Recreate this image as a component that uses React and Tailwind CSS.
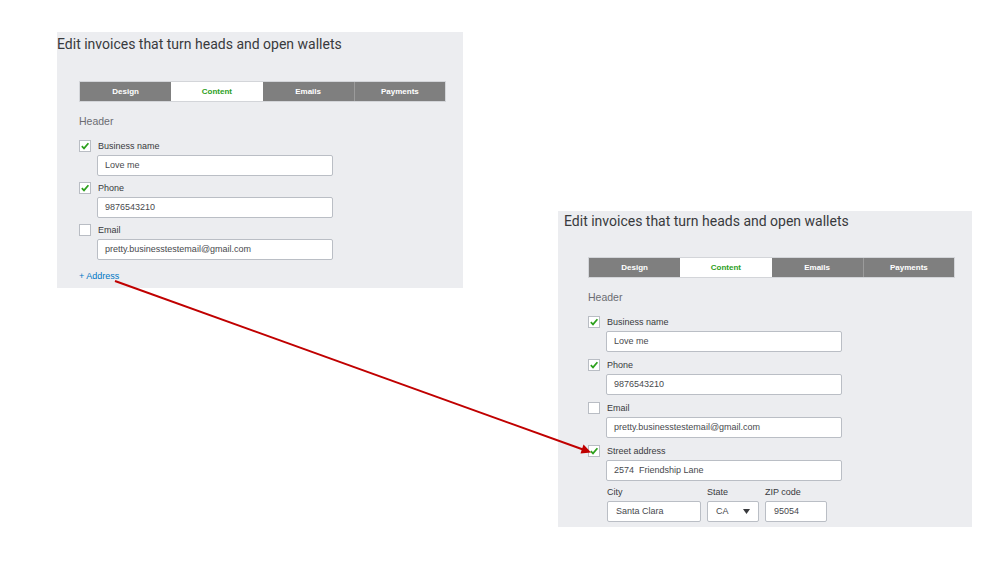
const ui = { fontFamily: '"Liberation Sans", Arial, sans-serif' };

const Check = ({ on }) => (
  <span className="flex h-[12px] w-[12px] shrink-0 items-center justify-center border border-[#b9bdc4] bg-white">
    {on && (
      <svg width="10" height="10" viewBox="0 0 10 10">
        <path d="M1.8 5.2 L4 7.4 L8.4 2.2" fill="none" stroke="#2ca01c" strokeWidth="1.7" />
      </svg>
    )}
  </span>
);

const Tabs = () => {
  const tabs = ["Design", "Content", "Emails", "Payments"];
  return (
    <div className="grid h-[21px] w-[367px] grid-cols-4 border border-[#d3d5d9]">
      {tabs.map((t, i) => (
        <div
          key={t}
          className={`flex items-center justify-center text-[8px] font-bold ${
            t === "Content"
              ? "bg-white text-[#2ca01c]"
              : "bg-[#7f7f7f] text-white"
          } ${i === 3 ? "border-l border-[#9b9b9b]" : ""}`}
        >
          {t}
        </div>
      ))}
    </div>
  );
};

const Field = ({ label, value, on, first, gap }) => (
  <div className={first ? "mt-[12px]" : gap}>
    <div className="flex h-[12px] items-center gap-[7px]">
      <Check on={on} />
      <span className="text-[9px] leading-[12px] text-[#393a3d]">{label}</span>
    </div>
    <div className="ml-[18px] mt-[3px] flex h-[21px] w-[236px] items-center whitespace-pre rounded-[2px] border border-[#babec5] bg-white pl-[7px] text-[9px] text-[#48494d]">
      {value}
    </div>
  </div>
);

const Panel = ({ titleOffset, contentOffset, titleTop, tabsTop, gap, children, size }) => (
  <div className={`flex shrink-0 flex-col bg-[#ecedf0] ${size}`} style={ui}>
    <div
      className={`h-[20px] whitespace-nowrap text-[14px] leading-[20px] text-[#393a3d] ${titleOffset} ${titleTop}`}
      style={{ fontFamily: 'Roboto, "Liberation Sans", sans-serif' }}
    >
      Edit invoices that turn heads and open wallets
    </div>
    <div className={`flex flex-col ${contentOffset}`}>
      <div className={tabsTop}>
        <Tabs />
      </div>
      <div className="mt-[12px] h-[14px] text-[10.5px] leading-[14px] text-[#6b6c72]">Header</div>
      <Field first on label="Business name" value="Love me" gap={gap} />
      <Field on label="Phone" value="9876543210" gap={gap} />
      <Field label="Email" value="pretty.businesstestemail@gmail.com" gap={gap} />
      {children}
    </div>
  </div>
);

const Small = ({ label, w, children }) => (
  <div className="flex flex-col">
    <span className="h-[12px] text-[9px] leading-[12px] text-[#393a3d]">{label}</span>
    <div className={`mt-[3px] flex h-[21px] items-center rounded-[2px] border border-[#babec5] bg-white pl-[8px] text-[9px] text-[#48494d] ${w}`}>
      {children}
    </div>
  </div>
);

export default function App() {
  return (
    <div className="relative flex h-[562px] w-[999px] items-start overflow-hidden bg-white">
      <div className="ml-[57px] mt-[32px]">
        <Panel
          size="h-[256px] w-[406px]"
          titleOffset="ml-0"
          titleTop="mt-[2px]"
          contentOffset="ml-[22px]"
          tabsTop="mt-[27px]"
          gap="mt-[6px]"
        >
          <div className="mt-[10px] h-[12px] text-[9px] leading-[12px] text-[#0077c5]">+ Address</div>
        </Panel>
      </div>

      <div className="ml-[95px] mt-[211px]">
        <Panel
          size="h-[316px] w-[414px]"
          titleOffset="ml-[6px]"
          titleTop="mt-0"
          contentOffset="ml-[30px]"
          tabsTop="mt-[26px]"
          gap="mt-[7px]"
        >
          <Field on label="Street address" value="2574  Friendship Lane" gap="mt-[7px]" />
          <div className="ml-[19px] mt-[5px] flex gap-[6px]">
            <Small label="City" w="w-[94px]">Santa Clara</Small>
            <Small label="State" w="w-[52px]">
              <span className="flex w-full items-center justify-between pr-[8px]">
                CA
                <svg width="7" height="5" viewBox="0 0 7 5">
                  <path d="M0 0 H7 L3.5 5 Z" fill="#393a3d" />
                </svg>
              </span>
            </Small>
            <Small label="ZIP code" w="w-[62px]">95054</Small>
          </div>
        </Panel>
      </div>

      <svg className="pointer-events-none absolute left-0 top-0" width="999" height="562" viewBox="0 0 999 562">
        <line x1="115" y1="281" x2="583" y2="449.5" stroke="#c00000" strokeWidth="2" />
        <polygon points="591,452.5 580.5,453.5 583.5,444.5" fill="#c00000" />
      </svg>
    </div>
  );
}
